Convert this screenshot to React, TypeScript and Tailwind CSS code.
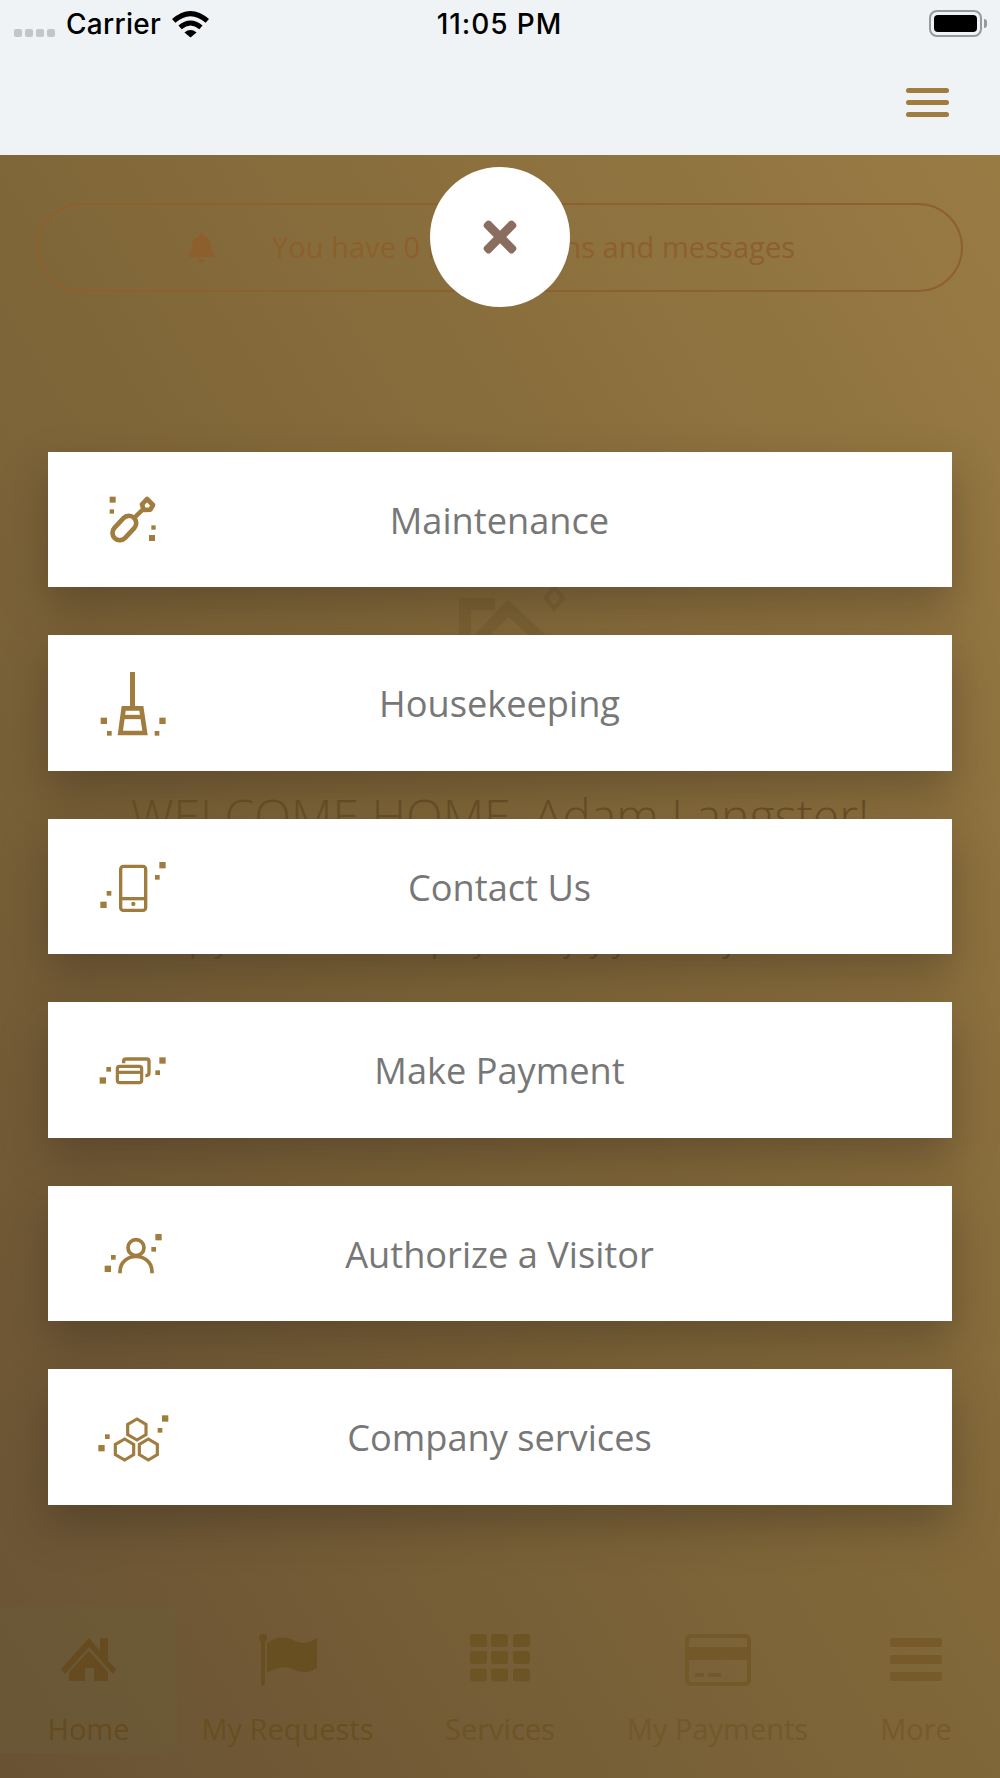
import { ReactNode } from "react";
import { FaBell, FaTimes } from "react-icons/fa";

const gold = "#a07c3f";

type MenuItem = {
  label: string;
  icon: ReactNode;
};

function Squares({ points }: { points: number[][] }) {
  return (
    <g fill={gold} stroke="none">
      {points.map(([x, y, s]) => (
        <rect key={`${x}-${y}`} x={x} y={y} width={s} height={s} />
      ))}
    </g>
  );
}

function MenuIcon({ viewBox, children }: { viewBox: string; children: ReactNode }) {
  return (
    <svg viewBox={viewBox} className="w-[90px] h-[90px] shrink-0" fill="none" stroke={gold}>
      {children}
    </svg>
  );
}

const menuItems: MenuItem[] = [
  {
    label: "Maintenance",
    icon: (
      <MenuIcon viewBox="0 -17 270 270">
        <Squares points={[[59, 51, 18], [59, 89, 13], [184, 137, 13], [177, 166, 18]]} />
        <rect x="-22" y="-42" width="44" height="84" rx="22" transform="translate(103 145) rotate(43)" strokeWidth="14" />
        <path d="M134 113L158 90" strokeWidth="13" />
        <path d="M156 74L171 58L189 76L181 90L161 91Z" strokeWidth="14" strokeLinejoin="round" />
      </MenuIcon>
    ),
  },
  {
    label: "Housekeeping",
    icon: (
      <MenuIcon viewBox="0 -8 270 270">
        <Squares points={[[32, 171, 19], [51, 211, 14], [208, 171, 19], [194, 211, 14]]} />
        <path d="M127.500 34V138" strokeWidth="15" />
        <path d="M101 143H154L165 217H91Z" strokeWidth="14" />
        <path d="M98 169H158" strokeWidth="13" />
      </MenuIcon>
    ),
  },
  {
    label: "Contact Us",
    icon: (
      <MenuIcon viewBox="0 -27 270 270">
        <Squares points={[[208, 36, 19], [195, 75, 14], [50, 123, 14], [31, 155, 19]]} />
        <rect x="92" y="49" width="75" height="132" rx="8" strokeWidth="10" />
        <path d="M92 146H167" strokeWidth="10" />
        <circle cx="130" cy="162" r="6.500" fill={gold} stroke="none" />
      </MenuIcon>
    ),
  },
  {
    label: "Make Payment",
    icon: (
      <MenuIcon viewBox="0 -46 270 270">
        <Squares points={[[208, 51, 19], [196, 90, 14], [49, 80, 14], [29, 111, 19]]} />
        <rect x="82" y="78" width="73" height="49" rx="7" strokeWidth="9.500" />
        <path d="M82 96H155" strokeWidth="9.500" />
        <path d="M101 69V62Q101 56 108 56H170Q177 56 177 63V99Q177 106 166 106" strokeWidth="10" />
      </MenuIcon>
    ),
  },
  {
    label: "Authorize a Visitor",
    icon: (
      <MenuIcon viewBox="0 -36 270 270">
        <Squares points={[[196, 42, 19], [184, 81, 14], [63, 105, 14], [44, 137, 19]]} />
        <circle cx="138" cy="83" r="24" strokeWidth="11" />
        <path d="M90 160V156C90 94 186 94 186 156V160" strokeWidth="11" />
      </MenuIcon>
    ),
  },
  {
    label: "Company services",
    icon: (
      <MenuIcon viewBox="0 -26 270 270">
        <Squares points={[[216, 44, 19], [203, 82, 14], [45, 101, 14], [25, 133, 19]]} />
        <g strokeWidth="9.500">
          <path d="M141 55L168 71V102L141 118L113 102V71Z" />
          <path d="M104 115L131 131V162L104 178L76 162V131Z" />
          <path d="M175 115L202 131V162L175 178L148 162V131Z" />
        </g>
      </MenuIcon>
    ),
  },
];

function StatusBar() {
  return (
    <div className="grid grid-cols-3 items-center h-12 pl-[14px] pr-[13px] font-['Inter',sans-serif] text-[28px] text-black">
      <div className="flex items-center">
        <div className="flex gap-[3px] mt-[17px]">
          <span className="size-[8px] rounded-[2px] bg-[#c3c5c8]" />
          <span className="size-[8px] rounded-[2px] bg-[#c3c5c8]" />
          <span className="size-[8px] rounded-[2px] bg-[#c3c5c8]" />
          <span className="size-[8px] rounded-[2px] bg-[#c3c5c8]" />
        </div>
        <span className="ml-[11px] font-medium tracking-[0.3px]">Carrier</span>
        <svg viewBox="0 0 110 82" className="w-[37px] h-[28px] ml-[11px]" fill="none" stroke="#000" strokeWidth="15">
          <path d="M5 32Q55 -12 105 32" />
          <path d="M24 51Q55 25 86 51" />
          <path d="M55 81L37 66Q55 52 73 66Z" fill="#000" stroke="none" />
        </svg>
      </div>
      <span className="text-center font-medium tracking-[0.900px] -ml-[2px]">11:05 PM</span>
      <div className="flex justify-end items-center gap-[2px] -mt-[2px]">
        <div className="w-[53px] h-[27px] p-[3px] border-2 border-[#98999c] rounded-[8px]">
          <div className="h-full rounded-[4px] bg-black" />
        </div>
        <span className="w-[3px] h-[9px] rounded-r-full bg-[#98999c]" />
      </div>
    </div>
  );
}

function NavItem({ label, className, children }: { label: string; className: string; children: ReactNode }) {
  return (
    <div className={`flex flex-col items-center pt-[27px] ${className}`}>
      <svg viewBox="0 0 66 52" className="w-[66px] h-[52px]" fill="currentColor">
        {children}
      </svg>
      <span className="mt-[23px] text-[29px] leading-[40px] whitespace-nowrap">{label}</span>
    </div>
  );
}

function BottomNav() {
  return (
    <nav className="flex h-[171px] text-[#6d5425]">
      <NavItem label="Home" className="w-[177px] h-[146px] rounded-br-lg bg-[#6a5f37]/30 text-[#654b1f]">
        <path d="M33 4L44 17V4H52V27L60 35L57 40L33 13L9 40L5 35Z" />
        <path d="M33 17L52 38V47H38V34H29V47H13V38Z" />
      </NavItem>
      <NavItem label="My Requests" className="w-[221px] text-[#684f21]">
        <rect x="6" y="4" width="4" height="48" rx="2" />
        <circle cx="8" cy="4" r="4" />
        <path d="M12 9Q25 0 38 6Q49 13 62 4V34Q50 42 38 35Q27 30 12 39Z" />
      </NavItem>
      <NavItem label="Services" className="w-[204px]">
        {[0, 17, 34.500].map((y) =>
          [3, 24, 46].map((x) => <rect key={`${x}-${y}`} x={x} y={y} width="17" height="13" rx="3" />)
        )}
      </NavItem>
      <NavItem label="My Payments" className="w-[231px] text-[#73582a]">
        <rect x="2" y="2" width="62" height="48" rx="4" fill="none" stroke="currentColor" strokeWidth="4" />
        <path d="M2 13H64V26H2ZM10 39H19V43H10ZM23 39H36V43H23Z" />
      </NavItem>
      <NavItem label="More" className="w-[166px] text-[#765a2a]">
        <rect x="7" y="4" width="52" height="9" rx="2" />
        <rect x="7" y="21" width="52" height="9" rx="2" />
        <rect x="7" y="38" width="52" height="9" rx="2" />
      </NavItem>
    </nav>
  );
}

export default function App() {
  return (
    <div className="flex flex-col w-[1000px] h-[1778px] overflow-hidden font-['Open_Sans',sans-serif]">
      <header className="h-[154.500px] shrink-0 bg-[#eff3f6]">
        <StatusBar />
        <div className="flex justify-end pt-10 pr-[51px]">
          <button aria-label="Menu" className="flex flex-col gap-[7px] w-[43px]">
            <span className="h-[5px] w-full rounded-full bg-[#a07c3f]" />
            <span className="h-[5px] w-full rounded-full bg-[#a07c3f]" />
            <span className="h-[5px] w-full rounded-full bg-[#a07c3f]" />
          </button>
        </div>
      </header>

      <main className="relative flex-1 flex flex-col bg-linear-to-bl from-[#997b44] via-[#806739] to-[#695234]">
        <div className="flex items-center h-[89px] mt-[48.500px] mx-[37px] pl-[149px] border-2 border-[#8e602e] rounded-full text-[#8d5f2d]">
          <FaBell className="w-[27px] h-[30px]" />
          <span className="ml-[57px] pt-px text-[29.100px] whitespace-nowrap">You have 0 notifications and messages</span>
        </div>

        <svg viewBox="0 0 200 60" className="w-[200px] h-[60px] mt-[288px] mx-auto" fill="none" stroke="#765d31" opacity="0.5">
          <path d="M65 60V24H95M78 60L108 28L142 60" strokeWidth="12" />
          <path d="M154 7L163 18L154 29L146 18Z" strokeWidth="4" />
        </svg>
        <div className="mt-[148px] text-center text-[48px] leading-[56px] font-light text-[#6b5228] whitespace-nowrap">
          WELCOME HOME, Adam Langster!
        </div>
        <div className="mt-[77px] pr-3 text-center text-[29.200px] leading-[40px] text-[#655029] whitespace-nowrap">
          Simply relax as we hope you enjoy your stay with us!
        </div>
        <div className="mt-auto">
          <BottomNav />
        </div>

        <div className="absolute inset-0 flex flex-col items-center pt-[12px]">
          <button aria-label="Close" className="flex items-center justify-center size-[140px] rounded-full bg-white">
            <FaTimes className="size-12 text-[#8a6d5f]" />
          </button>
          <div className="flex flex-col gap-12 w-[904px] mt-[145px]">
            {menuItems.map((item) => (
              <button
                key={item.label}
                className="grid grid-cols-[90px_1fr_90px] items-center h-[135.500px] px-[42px] bg-white shadow-[0_20px_40px_rgba(45,35,25,0.35)]"
              >
                {item.icon}
                <span className="pt-px pr-px text-center text-[36.200px] text-[#777777]">{item.label}</span>
              </button>
            ))}
          </div>
        </div>
      </main>
    </div>
  );
}
